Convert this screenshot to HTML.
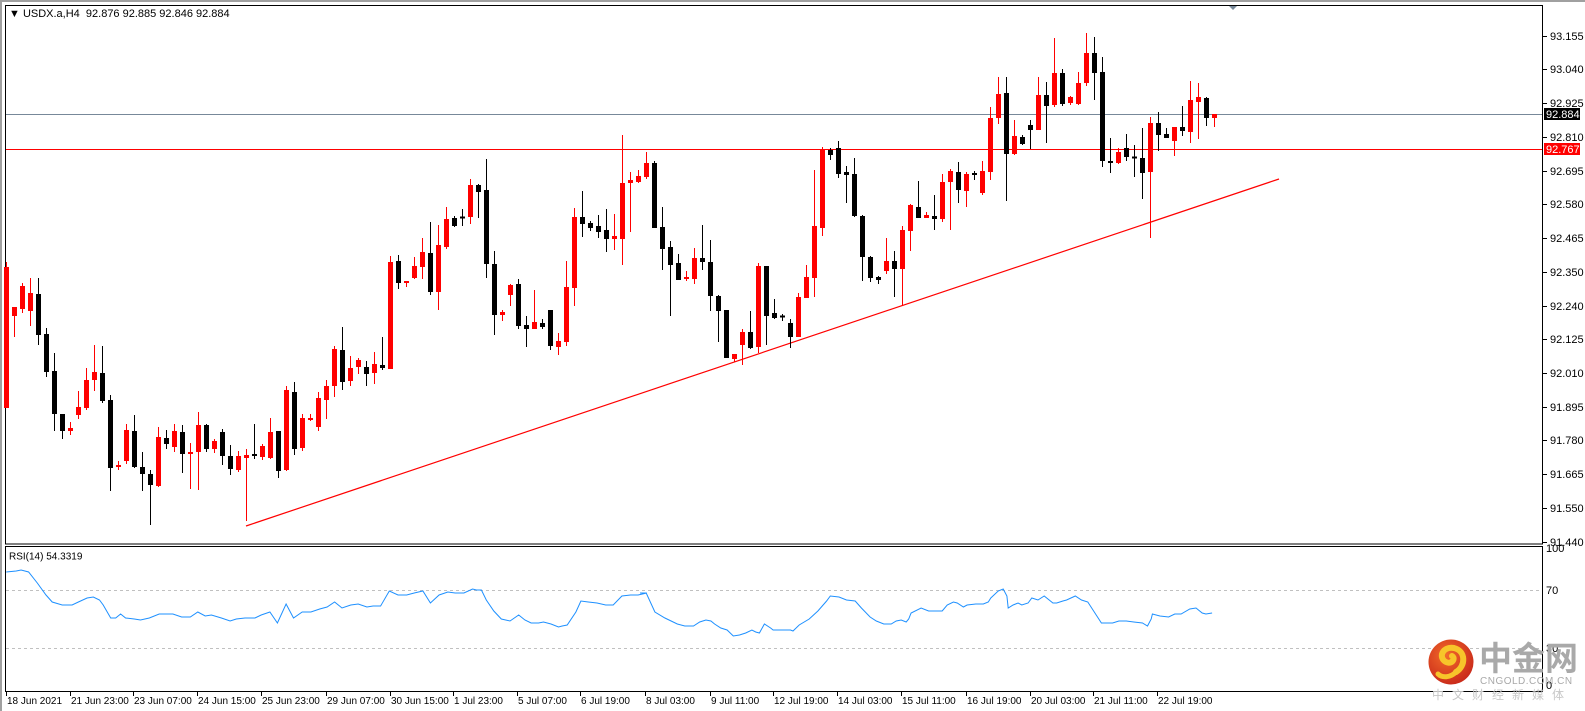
<!DOCTYPE html>
<html><head><meta charset="utf-8">
<style>
html,body{margin:0;padding:0;background:#fff;width:1585px;height:711px;overflow:hidden}
svg{display:block}
text{font-family:"Liberation Sans",Tahoma,sans-serif;font-size:11px;fill:#000}
</style></head>
<body>
<svg id="s" width="1585" height="711" xmlns="http://www.w3.org/2000/svg">
<defs>
<radialGradient id="lg" cx="40%" cy="35%" r="70%">
<stop offset="0" stop-color="#f26a2a"/><stop offset="1" stop-color="#c8281a"/>
</radialGradient>
</defs>
<rect x="0" y="0" width="1585" height="711" fill="#fff"/>
<rect x="0" y="0" width="1585" height="2" fill="#a0a0a0"/>
<rect x="0" y="0" width="2" height="711" fill="#a0a0a0"/>
<rect x="5.5" y="5.5" width="1537" height="538.5" fill="none" stroke="#000" stroke-width="1"/>
<rect x="5.5" y="546.5" width="1537" height="145" fill="none" stroke="#000" stroke-width="1"/>
<line x1="6" y1="590.5" x2="1542" y2="590.5" stroke="#c0c0c0" stroke-dasharray="3,3"/>
<line x1="6" y1="648.5" x2="1542" y2="648.5" stroke="#c0c0c0" stroke-dasharray="3,3"/>
<line x1="6" y1="114.5" x2="1542" y2="114.5" stroke="#778899"/>
<line x1="6" y1="149.5" x2="1542" y2="149.5" stroke="#ff0000"/>
<line x1="246" y1="526" x2="1279" y2="179" stroke="#ff0000" stroke-width="1.2"/>
<polygon points="1229,6 1237,6 1233,10" fill="#778899"/>
<g id="candles"></g>
<polyline id="rsi" fill="none" stroke="#1e90ff" stroke-width="1"/>
<text x="9" y="17">&#9660; USDX.a,H4&#160; 92.876 92.885 92.846 92.884</text>
<text x="9" y="553" style="font-size:10px" dominant-baseline="hanging">RSI(14) 54.3319</text>
<g id="axis"></g>
<rect x="1544" y="108" width="36" height="12" fill="#000"/>
<text x="1546" y="118" style="fill:#fff">92.884</text>
<rect x="1544" y="143" width="36" height="12" fill="#ff0000"/>
<text x="1546" y="153" style="fill:#fff">92.767</text>
<text x="1546" y="552">100</text>
<text x="1546" y="594">70</text>
<text x="1546" y="652">30</text>
<text x="1546" y="689">0</text>
<circle cx="1451" cy="662" r="22.5" fill="url(#lg)"/>
<path d="M1456,672 C1466,666 1466,651 1454,648 C1442,646 1438,658 1446,662 C1452,665 1456,658 1452,656" fill="none" stroke="#f7c52a" stroke-width="6" stroke-linecap="round"/>
<path d="M1456,672 C1450,678 1442,678 1438,674" fill="none" stroke="#f7c52a" stroke-width="5" stroke-linecap="round"/>
<text x="1479" y="670" style="font-family:'Noto Sans CJK SC',sans-serif;font-size:33px;font-weight:bold;fill:#a9a9a9">中金网</text>
<text x="1480" y="684" style="font-size:10px;fill:#a9a9a9;letter-spacing:0.5px">CNGOLD.COM.CN</text>
<text x="1432" y="699" style="font-family:'Noto Sans CJK SC',sans-serif;font-size:12px;fill:#c8c8c8;letter-spacing:8px">中文财经新媒体</text>
</svg>
<script>
var D=[[408,267,262,408],[316,307,307,337],[309,286,283,313],[311,293,278,326],[294,335,278,345],[334,372,328,377],[371,414,353,431],[414,431,414,439],[431,428,422,435],[415,407,391,419],
[408,380,368,410],[380,372,345,391],[373,401,346,403],[400,468,395,491],[467,465,461,470],[461,430,424,464],[431,467,415,468],[467,474,452,491],[474,485,470,525],[486,437,427,487],
[438,444,430,449],[447,431,424,452],[432,454,425,473],[454,452,443,489],[452,425,412,490],[425,449,424,452],[449,441,439,453],[432,456,429,465],[456,469,445,475],[470,456,451,472],
[458,455,449,521],[454,456,424,459],[457,446,444,460],[458,432,418,459],[431,471,431,478],[470,390,386,471],[392,449,382,455],[448,418,414,451],[420,418,414,421],[427,398,392,431],
[400,386,380,419],[386,349,346,397],[350,382,327,390],[381,368,356,386],[367,360,358,374],[367,374,361,386],[373,364,352,384],[365,368,337,370],[369,262,256,369],[261,283,255,289],
[283,281,281,287],[278,266,257,279],[267,252,238,279],[253,292,222,295],[292,245,225,310],[247,219,207,249],[218,226,216,227],[217,218,209,226],[217,185,179,224],[185,192,184,218],
[190,264,159,278],[264,315,251,335],[315,312,310,321],[295,285,284,306],[284,326,279,329],[325,329,316,347],[329,322,290,329],[323,327,319,329],[310,346,310,350],[347,341,333,355],
[342,287,261,346],[288,217,208,306],[217,224,191,237],[223,228,221,231],[226,232,215,238],[230,239,209,252],[239,236,214,250],[239,183,135,265],[183,180,172,232],[182,176,170,183],
[177,163,152,179],[163,228,161,228],[227,249,207,270],[247,265,241,316],[263,280,254,280],[279,277,271,281],[279,258,248,284],[258,262,225,270],[262,296,240,311],[296,311,295,342],
[310,358,310,358],[359,354,354,362],[345,332,329,365],[332,348,311,349],[347,266,263,353],[266,316,266,345],[313,318,299,319],[316,317,314,321],[323,337,319,348],[337,297,293,337],
[298,277,265,298],[278,226,170,297],[228,149,147,236],[150,155,148,160],[148,174,141,178],[172,175,166,203],[174,216,158,217],[216,257,215,281],[257,278,256,282],[277,280,276,284],
[271,261,238,274],[261,269,251,297],[269,230,226,306],[231,205,204,251],[207,218,181,218],[218,215,212,218],[216,219,195,230],[219,182,174,222],[182,171,169,230],[172,190,162,203],
[191,174,172,207],[173,175,171,180],[193,171,161,195],[172,118,107,180],[118,94,77,124],[93,154,77,201],[154,136,120,155],[137,144,135,145],[125,130,120,149],[130,95,77,130],
[95,106,82,143],[105,73,38,107],[73,104,69,106],[103,97,96,105],[104,83,72,105],[83,53,33,86],[53,73,37,100],[72,161,57,167],[161,163,138,173],[163,152,148,164],
[148,157,134,161],[157,158,145,177],[158,173,128,199],[172,123,117,238],[123,135,112,151],[134,138,128,138],[141,127,127,156],[127,131,106,136],[132,100,81,143],[102,97,83,139],
[98,118,97,126],[118,114,114,127]];
var g=document.getElementById('candles'),h='';
for(var i=0;i<D.length;i++){var d=D[i],o=d[0],c=d[1],hi=d[2],lo=d[3];var cx=6.5+8*i;var col=c<o?'#ff0000':'#000000';
h+='<rect x="'+(cx-0.5)+'" y="'+hi+'" width="1" height="'+Math.max(1,lo-hi)+'" fill="'+col+'"/>';
var t=Math.min(o,c),b=Math.max(o,c);if(b-t<2){t=(t+b)/2-1;b=t+2;}
h+='<rect x="'+(cx-2.5)+'" y="'+t+'" width="5" height="'+(b-t)+'" fill="'+col+'"/>';}
g.innerHTML=h;
var A=[[5,572],[13,571],[17,570],[23,572],[30,583],[37,595],[42,602],[50,605],[58,605],[63,602],[70,598],[75,597],[80,600],[83,605],[89,618],[93,618],[97,614],[101,618],[108,619],[113,620],[120,618],[128,614],[133,614],[139,614],[146,617],[153,617],[159,612],[165,616],[170,615],[178,618],[185,621],[190,619],[197,618],[205,618],[210,615],[217,612],[223,623],[230,604],[236,618],[243,612],[250,612],[257,609],[263,607],[269,602],[275,608],[282,605],[288,604],[295,607],[300,606],[306,606],[313,591],[320,595],[327,595],[333,593],[340,591],[346,603],[353,595],[360,592],[366,593],[373,593],[380,589],[383,590],[387,590],[391,600],[397,611],[403,619],[410,621],[417,615],[422,620],[427,623],[433,623],[437,622],[443,624],[449,627],[452,626],[456,625],[463,612],[467,601],[473,602],[480,603],[487,605],[493,605],[500,596],[507,595],[513,595],[520,593]];
var B=[[640,593],[645,593],[652,612],[660,618],[670,624],[676,626],[683,626],[688,622],[693,620],[697,621],[700,624],[705,628],[710,630],[715,636],[720,635],[725,633],[730,630],[733,632],[736,633],[740,624],[745,628],[747,630],[755,630],[761,630],[763,631],[768,625],[776,619],[783,611],[790,601],[793,596],[800,597],[806,600],[813,601],[818,608],[825,617],[830,621],[836,624],[842,624],[846,621],[850,620],[854,622],[856,619],[858,613],[866,608],[872,611],[880,611],[883,611],[887,605],[892,602],[895,603],[900,607],[903,605],[910,604],[916,604],[920,602],[922,598],[928,591],[932,589],[935,596],[936,608],[940,605],[944,603],[947,605],[952,603],[955,598],[960,600],[965,596],[972,603],[975,603],[980,601],[983,600],[990,596],[995,600],[1000,602],[1011,623],[1020,623],[1025,621],[1031,621],[1037,622],[1044,623],[1048,626],[1051,619],[1052,614],[1058,616],[1065,617],[1070,614],[1075,614],[1082,609],[1087,608],[1092,613],[1095,614],[1100,613]];
var k=1.2438,p=[];A.forEach(function(a){p.push((a[0]*k).toFixed(1)+','+a[1])});B.forEach(function(a){p.push((640+(a[0]-640)*k).toFixed(1)+','+a[1])});
document.getElementById('rsi').setAttribute('points',p.join(' '));
var ax='',L=['93.155','93.040','92.925','92.810','92.695','92.580','92.465','92.350','92.240','92.125','92.010','91.895','91.780','91.665','91.550','91.440'];
for(var j=0;j<L.length;j++){var y=35.7+j*33.73;if(j==15)y=541.5;ax+='<rect x="1543" y="'+Math.round(y)+'" width="4" height="1" fill="#000"/><text x="1550" y="'+(Math.round(y)+4)+'">'+L[j]+'</text>';}
var T=[[6,'18 Jun 2021'],[70,'21 Jun 23:00'],[133,'23 Jun 07:00'],[197,'24 Jun 15:00'],[261,'25 Jun 23:00'],[326,'29 Jun 07:00'],[390,'30 Jun 15:00'],[453,'1 Jul 23:00'],[517,'5 Jul 07:00'],[580,'6 Jul 19:00'],[645,'8 Jul 03:00'],[710,'9 Jul 11:00'],[773,'12 Jul 19:00'],[837,'14 Jul 03:00'],[901,'15 Jul 11:00'],[966,'16 Jul 19:00'],[1030,'20 Jul 03:00'],[1093,'21 Jul 11:00'],[1157,'22 Jul 19:00']];
T.forEach(function(t){ax+='<rect x="'+t[0]+'" y="692" width="1" height="4" fill="#000"/><text x="'+(t[0]+1)+'" y="704" style="font-size:10px">'+t[1]+'</text>';});
document.getElementById('axis').innerHTML=ax;
</script>
</body></html>
